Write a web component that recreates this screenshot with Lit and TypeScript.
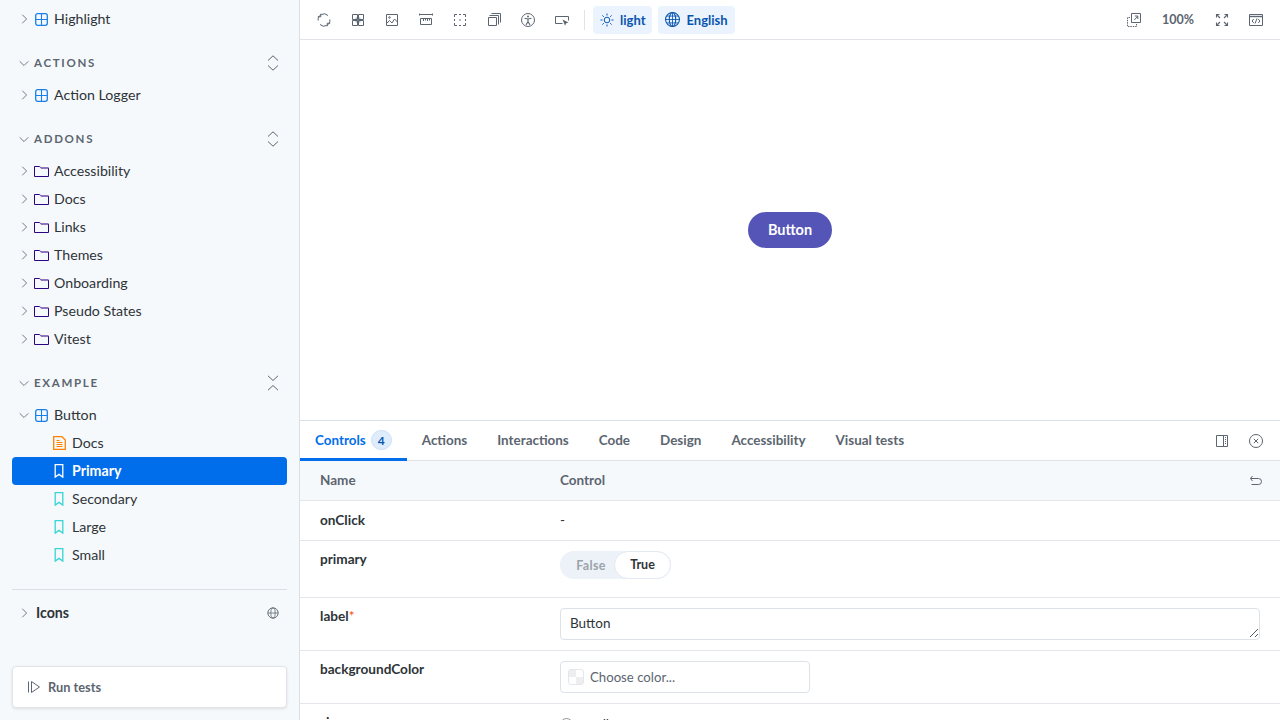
import { LitElement, html, css, svg } from "lit";
import { customElement } from "lit/decorators.js";

const ic = (body: unknown, size = 14, cls = "") =>
  html`<svg class=${cls} width=${size} height=${size} viewBox="0 0 14 14" fill="none" stroke="currentColor" stroke-width="1">${body}</svg>`;

const chevR = ic(svg`<path d="M5 2 10 7 5 12"/>`, 12, "chev");
const chevD = ic(svg`<path d="M2 5 7 10 12 5"/>`, 12, "chev");
const comp = html`<svg class="ti" width="13" height="13" viewBox="0 0 13 13" fill="none"><rect x=".7" y=".7" width="11.600" height="11.600" rx="2" stroke="#1a7fe8" stroke-width="1.300"/><path d="M6.500 1v11M1 6.500h11" stroke="#1a7fe8" stroke-width="1.100"/></svg>`;
const folder = html`<svg class="ti" width="15" height="13" viewBox="0 0 15 13" fill="none"><path d="M.5 11.500V1.500h5l1.500 1.500h7.500v8.500z" stroke="#2a0481" stroke-width="1"/><path d="M6 1.800 7.200 3h7.300" stroke="#8e6cc4" stroke-width="1.200"/></svg>`;
const doc = html`<svg class="ti" width="13" height="14" viewBox="0 0 13 14" fill="none"><path d="M.7.7h8.200l3.400 3.400v9.200H.7z" stroke="#ff8300" stroke-width="1.300"/><path d="M3.500 6.500h6M3.500 8.500h6M3.500 10.500h6M3.500 4.500h3" stroke="#ff8300" stroke-width="1"/></svg>`;
const mark = (c: string) => html`<svg class="ti" width="10" height="14" viewBox="0 0 10 14" fill="none"><path d="M1.200.7h7.600v12.400L5 10.400l-3.800 2.700z" stroke=${c} stroke-width="1.300"/></svg>`;
const expand = html`<svg class="exp" width="14" height="16" viewBox="0 0 14 16" fill="none" stroke="#5c6570" stroke-width="1"><path d="M2 5.500 7 .8 12 5.500M2 10.500 7 15.200 12 10.500"/></svg>`;
const collapse = html`<svg class="exp" width="14" height="16" viewBox="0 0 14 16" fill="none" stroke="#5c6570" stroke-width="1"><path d="M2 .8 7 5.500 12 .8M2 15.200 7 10.500 12 15.200"/></svg>`;

const tools = [
  svg`<path d="M12.800 6.500A5.800 5.800 0 0 1 3 11.500M1.200 7.500A5.800 5.800 0 0 1 11 2.500"/><path d="M3.800.8v3h-3M10.200 13.200v-3h3" stroke-width="1"/>`,
  svg`<path d="M1.500 1.500h5v5h-5zM7.500 1.500h5v5h-5zM1.500 7.500h5v5h-5zM7.500 7.500h5v5h-5z"/><path d="M4.500 4.500h5v5h-5z" fill="currentColor" fill-opacity=".45" stroke="none"/>`,
  svg`<path d="M1.500 1.500h11v11h-11z"/><path d="m1.500 10.500 3-3 2.500 2.500 2.500-4 3 3"/><circle cx="4.500" cy="4.500" r=".8"/>`,
  svg`<path d="M.8 1.500h12.400M.5 .5v2M13.500 .5v2M1.500 5.500h11v6h-11z"/><path d="M4.500 5.500v2.500M6.500 5.500v2M8.500 5.500v2.500M10.500 5.500v2"/>`,
  svg`<path d="M1.500 4V1.500H4M10 1.500h2.500V4M12.500 10v2.500H10M4 12.500H1.500V10"/><path d="M6 1.500h2M6 12.500h2M1.500 6v2M12.500 6v2"/><circle cx="7" cy="7" r=".8" fill="currentColor" stroke="none"/>`,
  svg`<path d="M1.500 4.500h8v8h-8zM2.500 2.500h9v9M4.500 .5h9v9"/>`,
  svg`<circle cx="7" cy="7" r="6.500"/><circle cx="7" cy="3.600" r="1" fill="currentColor" stroke="none"/><path d="M3.500 5.300 7 6l3.500-.7M7 6v2.500M7 8.500 5 12M7 8.500 9 12" stroke-width="1.100"/>`,
  svg`<path d="M7.500 10.500H.5v-7h13v4"/><path d="M7.500 6.500 13.500 9.400l-2.400.8-1 2.500z" fill="currentColor" stroke="none"/>`,
];

const rightTools = {
  open: svg`<path d="M4.500.5h9v9h-9z"/><path d="M7.200 7 10.800 3.200M7.800 3h3v3"/><path d="M3 4.500H.5v9h9V11" stroke-dasharray="1.500 .9"/>`,
  full: svg`<path d="M1.500 4.500v-3h3M9.500 1.500h3v3M12.500 9.500v3h-3M4.500 12.500h-3v-3M2 2l3 3M12 2 9 5M2 12l3-3M12 12 9 9" stroke-width="1.100"/>`,
  code: svg`<path d="M.5 1.500h13v11H.5z"/><path d="M.5 3.500h13" stroke-width="1.400"/><path d="M4.800 6 3 8l1.800 2M9.200 6 11 8l-1.800 2M8 5.500 6 10.500"/>`,
};

@customElement("app-root")
export class AppRoot extends LitElement {
  static styles = css`
    :host {
      display: flex;
      width: 1280px;
      height: 720px;
      overflow: hidden;
      background: #fff;
      color: #2e3438;
      font-family: "Lato", "Open Sans", sans-serif;
      font-size: 14.2px;
    }
    * { box-sizing: border-box; }
    svg { display: block; flex: none; }
    .side {
      width: 300px;
      flex: none;
      height: 720px;
      background: #f6f9fc;
      border-right: 1px solid #d9e0e6;
      padding: 5px 12px 0;
      display: flex;
      flex-direction: column;
    }
    .group { margin-bottom: 16px; }
    .row {
      height: 28px;
      display: flex;
      align-items: center;
      padding-left: 6px;
      font-size: 14.2px;
    }
    .row span { padding-bottom: 2px; }
    .row .chev { color: #5c6570; margin-right: 5px; }
    .row.comp .ti { margin-right: 6px; }
    .row.fold .chev { margin-right: 4px; }
    .row.fold .ti { margin-right: 5px; }
    .row.leaf { padding-left: 41px; }
    .row.leaf .ti { margin-right: 8px; margin-left: 1px; }
    .row.doc { padding-left: 41px; }
    .row.doc .ti { margin-right: 6px; }
    .row.sel {
      background: #006deb;
      color: #fff;
      font-weight: 700;
      border-radius: 4px;
    }
    .head {
      height: 28px;
      margin-bottom: 4px;
      display: flex;
      align-items: center;
      padding: 0 7px 0 6px;
      font-size: 11.5px;
      font-weight: 700;
      letter-spacing: 1.7px;
      color: #5c6570;
    }
    .head span { padding-bottom: 1px; }
    .head .chev { margin-right: 4px; color: #5c6570; }
    .head .exp { margin-left: auto; }
    .sep { border-top: 1px solid #d9e0e6; margin-top: 4px; height: 0; }
    .icons {
      margin-top: 9px;
      height: 28px;
      display: flex;
      align-items: center;
      padding: 0 8px 0 6px;
      font-weight: 700;
    }
    .icons span { padding-bottom: 1px; }
    .icons .chev { margin-right: 6px; color: #5c6570; }
    .icons .globe { margin-left: auto; color: #5c6570; }
    .run {
      margin-top: auto;
      margin-bottom: 12px;
      height: 42px;
      background: #fff;
      border: 1px solid #e1e5ea;
      border-radius: 4px;
      box-shadow: 0 1px 3px rgba(0, 0, 0, 0.1);
      display: flex;
      align-items: center;
      gap: 7px;
      padding-left: 14px;
      font-size: 12.8px;
      font-weight: 700;
      color: #5c6570;
    }
    .main { flex: 1; min-width: 0; display: flex; flex-direction: column; height: 720px; }
    .bar {
      height: 40px;
      flex: none;
      border-bottom: 1px solid #e0e4e8;
      display: flex;
      align-items: center;
      padding: 0 10px;
      gap: 6px;
    }
    .tb { width: 28px; height: 28px; display: flex; align-items: center; justify-content: center; color: #5c6570; }
    .div { width: 1px; height: 20px; background: #e0e4e8; margin: 0 2px; }
    .pill {
      height: 28px;
      display: flex;
      align-items: center;
      gap: 6px;
      padding: 0 7px;
      border-radius: 4px;
      background: #ebf4fe;
      color: #0a55ae;
      font-size: 13px;
      font-weight: 700;
    }
    .spacer { flex: 1; }
    .zoom { width: 54px; margin: 0 -3px; text-align: center; font-size: 12.5px; font-weight: 700; color: #5c6570; }
    .canvas { height: 380px; flex: none; display: flex; align-items: center; justify-content: center; }
    .btn {
      height: 36px;
      width: 84px;
      border-radius: 18px;
      background: #5555b8;
      color: #fff;
      font-weight: 700;
      font-size: 14.5px;
      display: flex;
      align-items: center;
      justify-content: center;
      padding-bottom: 2px;
    }
    .panel { flex: 1; min-height: 0; border-top: 1px solid #d9e0e6; overflow: hidden; display: flex; flex-direction: column; }
    .tabs { height: 40px; flex: none; display: flex; align-items: stretch; border-bottom: 1px solid #e0e4e8; }
    .tab {
      padding: 0 15px 2px;
      display: flex;
      align-items: center;
      gap: 5px;
      font-size: 13.45px;
      font-weight: 700;
      color: #5c6570;
      margin-bottom: -1px;
    }
    .tab.on { color: #006deb; border-bottom: 3px solid #006deb; padding-top: 1px; padding-bottom: 0; }
    .badge {
      width: 21px;
      height: 20px;
      border-radius: 10px;
      background: #deecfb;
      border: 1px solid #cfe2f8;
      color: #0a55ae;
      font-size: 12px;
      font-weight: 700;
      display: flex;
      align-items: center;
      justify-content: center;
    }
    .tabtools { margin-left: auto; display: flex; align-items: center; gap: 6px; padding-right: 10px; color: #5c6570; }
    .grid { display: grid; grid-template-columns: 260px 1fr; }
    .c { border-bottom: 1px solid #e3e7eb; padding: 0 20px 0 0; }
    .nm { padding-left: 20px; }
    .hd {
      background: #f6f9fc;
      height: 40px;
      display: flex;
      align-items: center;
      font-size: 13.5px;
      font-weight: 700;
      color: #5c6570;
      padding-bottom: 2px;
    }
    .hd svg { margin-top: 2px; }
    .hd.r { justify-content: space-between; padding-right: 18px; }
    .n { font-weight: 700; font-size: 13.6px; padding-top: 9px; line-height: 18px; }
    .req { color: #ff4400; font-weight: 400; }
    .v { font-size: 13.5px; }
    .r1 { height: 40px; display: flex; align-items: center; padding-top: 0; padding-bottom: 2px; }
    .r2 { height: 57px; }
    .r3 { height: 53px; }
    .v.r2, .v.r3 { padding-top: 10px; }
    .toggle {
      display: inline-flex;
      width: 111px;
      height: 28px;
      border-radius: 14px;
      background: #edf2f9;
      align-items: center;
      font-size: 12.5px;
      font-weight: 700;
    }
    .toggle .f { width: 62px; margin-right: -8px; text-align: center; color: #9aa2ab; letter-spacing: 0.3px; }
    .toggle .t {
      width: 57px;
      height: 28px;
      line-height: 26px;
      text-align: center;
      background: #fff;
      border: 1.5px solid #e3e9f2;
      border-radius: 14px;
      position: relative;
    }
    .input {
      height: 32px;
      border: 1px solid #dde2e8;
      border-radius: 4px;
      display: flex;
      align-items: center;
      padding: 0 9px 2px;
      position: relative;
    }
    .grip { position: absolute; right: 0; bottom: 1px; }
    .color {
      width: 250px;
      height: 32px;
      border: 1px solid #dde2e8;
      border-radius: 4px;
      display: flex;
      align-items: center;
      gap: 6px;
      padding-left: 7px;
      color: #5c6570;
      font-size: 13.2px;
    }
    .swatch {
      width: 16px;
      height: 16px;
      border-radius: 3px;
      border: 1px solid #e3e7eb;
      background: conic-gradient(#fff 0 25%, #eee 0 50%, #fff 0 75%, #eee 0);
    }
    .radio { display: flex; align-items: center; gap: 6px; height: 18px; margin-top: 1px; }
    .dot { width: 13px; height: 13px; border-radius: 50%; border: 1px solid #8d949b; flex: none; }
  `;

  private leaf(name: string) {
    return html`<div class="row fold">${chevR}${folder}<span>${name}</span></div>`;
  }

  render() {
    return html`
      <aside class="side">
        <div class="group"><div class="row comp">${chevR}${comp}<span>Highlight</span></div></div>
        <div class="head">${chevD}<span>ACTIONS</span>${expand}</div>
        <div class="group"><div class="row comp">${chevR}${comp}<span>Action Logger</span></div></div>
        <div class="head">${chevD}<span>ADDONS</span>${expand}</div>
        <div class="group">
          ${["Accessibility", "Docs", "Links", "Themes", "Onboarding", "Pseudo States", "Vitest"].map((n) => this.leaf(n))}
        </div>
        <div class="head">${chevD}<span>EXAMPLE</span>${collapse}</div>
        <div class="group">
          <div class="row comp">${chevD}${comp}<span>Button</span></div>
          <div class="row doc">${doc}<span>Docs</span></div>
          <div class="row leaf sel">${mark("#fff")}<span>Primary</span></div>
          <div class="row leaf">${mark("#37d5d3")}<span>Secondary</span></div>
          <div class="row leaf">${mark("#37d5d3")}<span>Large</span></div>
          <div class="row leaf">${mark("#37d5d3")}<span>Small</span></div>
        </div>
        <div class="sep"></div>
        <div class="icons">${chevR}<span>Icons</span>
          ${ic(svg`<circle cx="7" cy="7" r="6" stroke-width="1.100"/><path d="M1 7h12" stroke-width=".9"/><ellipse cx="7" cy="7" rx="2.500" ry="6" stroke-width=".9"/>`, 12, "globe")}
        </div>
        <div class="run">
          ${ic(svg`<path d="M1.500 1.500v11M4.500 1.500 12.500 7l-8 5.500z"/>`, 14)}<span>Run tests</span>
        </div>
      </aside>
      <main class="main">
        <div class="bar">
          ${tools.map((t) => html`<div class="tb">${ic(t)}</div>`)}
          <div class="div"></div>
          <div class="pill">
            ${ic(svg`<circle cx="7" cy="7" r="2.800"/><path d="M7 .5v2M7 11.500v2M.5 7h2M11.500 7h2M2.400 2.400l1.400 1.400M10.200 10.200l1.400 1.400M2.400 11.600l1.400-1.400M10.200 3.800l1.400-1.400"/>`)}
            <span>light</span>
          </div>
          <div class="pill">
            ${ic(svg`<circle cx="7" cy="7" r="6.500"/><ellipse cx="7" cy="7" rx="3" ry="6.500"/><path d="M.5 7h13M7 .5v13M1.500 3.800h11M1.500 10.200h11" stroke-width=".8"/>`, 15)}
            <span>English</span>
          </div>
          <div class="spacer"></div>
          <div class="tb">${ic(rightTools.open)}</div>
          <div class="zoom">100%</div>
          <div class="tb">${ic(rightTools.full)}</div>
          <div class="tb">${ic(rightTools.code)}</div>
        </div>
        <div class="canvas"><div class="btn">Button</div></div>
        <section class="panel">
          <div class="tabs">
            <div class="tab on">Controls <span class="badge">4</span></div>
            <div class="tab">Actions</div>
            <div class="tab">Interactions</div>
            <div class="tab">Code</div>
            <div class="tab">Design</div>
            <div class="tab">Accessibility</div>
            <div class="tab">Visual tests</div>
            <div class="tabtools">
              <div class="tb">${ic(svg`<path d="M1.500 1.500h11v11h-11zM8.500 1.500v11"/><path d="M10.500 3v8" stroke-dasharray="1 1"/>`)}</div>
              <div class="tb">${ic(svg`<circle cx="7" cy="7" r="6.500"/><path d="m4.800 4.800 4.400 4.400M9.200 4.800 4.800 9.200"/>`)}</div>
            </div>
          </div>
          <div class="grid">
            <div class="c nm hd">Name</div>
            <div class="c hd r"><span>Control</span>${ic(svg`<path d="M2.500 4.500h8a2.800 2.800 0 0 1 0 6h-7M4.500 2l-2 2.500 2 2.500"/>`)}</div>
            <div class="c nm n r1">onClick</div>
            <div class="c v r1">-</div>
            <div class="c nm n r2">primary</div>
            <div class="c v r2"><div class="toggle"><span class="f">False</span><span class="t">True</span></div></div>
            <div class="c nm n r3">label<span class="req">*</span></div>
            <div class="c v r3"><div class="input">Button
              <svg class="grip" width="10" height="10" viewBox="0 0 10 10" fill="none" stroke="#555"><path d="M1 9 9 1M6 9l3-3"/></svg>
            </div></div>
            <div class="c nm n r3">backgroundColor</div>
            <div class="c v r3"><div class="color"><span class="swatch"></span><span>Choose color...</span></div></div>
            <div class="c nm n r3">size</div>
            <div class="c v r3"><div class="radio"><span class="dot"></span>small</div></div>
          </div>
        </section>
      </main>
    `;
  }
}
